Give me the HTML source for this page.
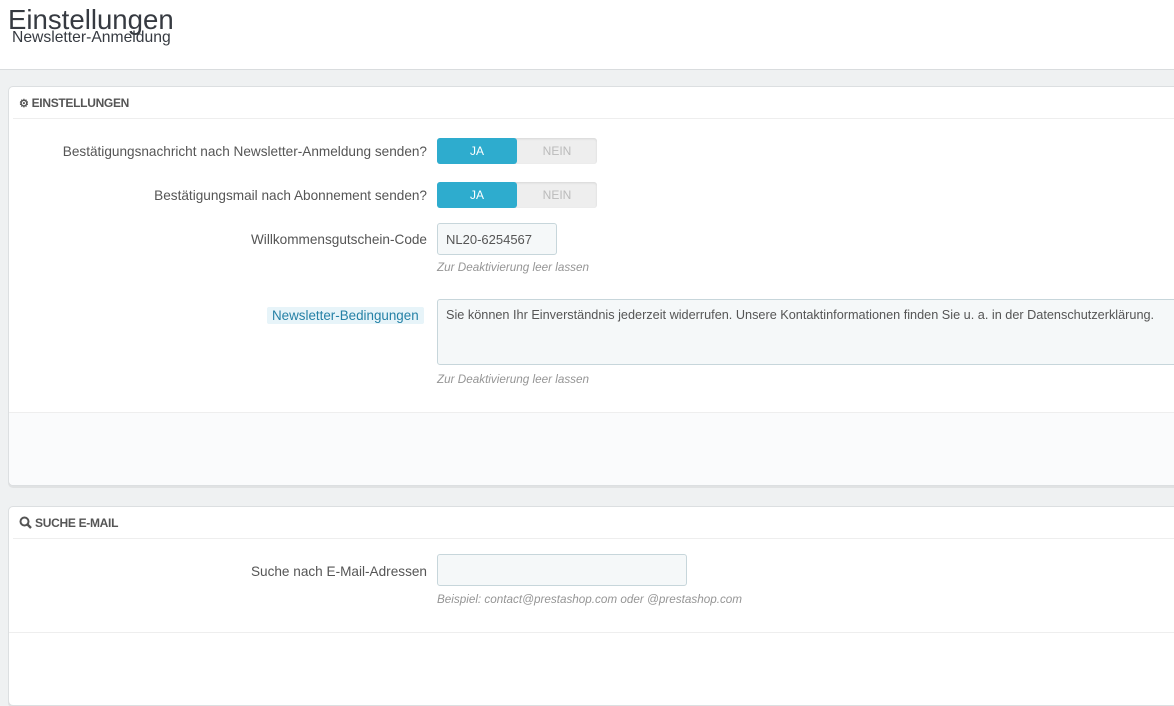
<!DOCTYPE html>
<html><head><meta charset="utf-8"><style>
*{box-sizing:border-box;margin:0;padding:0}
body{width:1174px;height:636px;overflow:hidden;background:#eff1f2;font-family:"Liberation Sans",sans-serif;color:#555;position:relative;font-size:12.5px}
.top{position:absolute;left:0;top:0;width:1174px;height:70px;background:#fff;border-bottom:1px solid #d9dcde}
.h1{position:absolute;left:8px;top:4px;font-size:27.6px;color:#363a41}
.h2{position:absolute;left:12px;top:29px;font-size:15.7px;color:#363a41}
.panel{position:absolute;left:8px;width:1180px;background:#fff;border:1px solid #dcdfe1;border-radius:5px;box-shadow:0 2px 0 rgba(0,0,0,.06)}
.ph{position:absolute;left:4px;right:0;top:0;height:32px;border-bottom:1px solid #eee;font-size:12px;font-weight:bold;color:#555;padding:9px 0 0 6px;letter-spacing:-.3px}
.lbl{position:absolute;text-align:right;width:418px;left:0;font-size:13.6px;color:#555}
.sw{position:absolute;left:428px;width:160px;height:26px;border-radius:3px;background:#eee;font-size:12px;box-shadow:inset 0 1px 2px rgba(0,0,0,.1)}
.sw .ja{position:absolute;left:0;top:0;width:80px;height:26px;background:#2eacce;color:#fff;border-radius:3px;text-align:center;line-height:26px}
.sw .ne{position:absolute;left:80px;top:0;width:80px;height:26px;color:#bbb;text-align:center;line-height:26px}
.inp{position:absolute;left:428px;background:#f5f8f9;border:1px solid #c7d6db;border-radius:3px;font-size:13px;color:#555;padding:8px 8px}
.help{position:absolute;left:428px;font-size:11.7px;font-style:italic;color:#959595}
</style></head><body>
<div class="top"><div class="h1">Einstellungen</div><div class="h2">Newsletter-Anmeldung</div></div>
<div class="panel" style="top:86px;height:400px">
<div class="ph"><span style="font-size:11px">⚙</span> EINSTELLUNGEN</div>
<div class="lbl" style="top:57px">Bestätigungsnachricht nach Newsletter-Anmeldung senden?</div>
<div class="sw" style="top:51px"><div class="ja">JA</div><div class="ne">NEIN</div></div>
<div class="lbl" style="top:101px">Bestätigungsmail nach Abonnement senden?</div>
<div class="sw" style="top:95px"><div class="ja">JA</div><div class="ne">NEIN</div></div>
<div class="lbl" style="top:145px">Willkommensgutschein-Code</div>
<div class="inp" style="top:136px;width:120px;height:32px">NL20-6254567</div>
<div class="help" style="top:174px">Zur Deaktivierung leer lassen</div>
<div style="position:absolute;left:258px;top:220px;background:#e7f4f9;color:#2581a6;font-size:13.4px;padding:1px 5px;border-radius:2px">Newsletter-Bedingungen</div>
<div class="inp" style="top:212px;width:760px;height:66px;font-size:12.7px">Sie können Ihr Einverständnis jederzeit widerrufen. Unsere Kontaktinformationen finden Sie u. a. in der Datenschutzerklärung.</div>
<div class="help" style="top:286px">Zur Deaktivierung leer lassen</div>
<div style="position:absolute;left:0;right:0;top:325px;bottom:0;background:#fafbfc;border-top:1px solid #eee;border-radius:0 0 5px 5px"></div>
</div>
<div class="panel" style="top:506px;height:200px">
<div class="ph"><svg width="13" height="13" viewBox="0 0 13 13" style="vertical-align:-2px"><circle cx="5.5" cy="5.5" r="4" fill="none" stroke="#555" stroke-width="2"/><path d="M8.5 8.5L12 12" stroke="#555" stroke-width="2.4"/></svg> SUCHE E-MAIL</div>
<div class="lbl" style="top:57px">Suche nach E-Mail-Adressen</div>
<div class="inp" style="top:47px;width:250px;height:32px"></div>
<div class="help" style="top:86px">Beispiel: contact@prestashop.com oder @prestashop.com</div>
<div style="position:absolute;left:0;right:0;top:125px;border-top:1px solid #eee"></div>
</div>
</body></html>
